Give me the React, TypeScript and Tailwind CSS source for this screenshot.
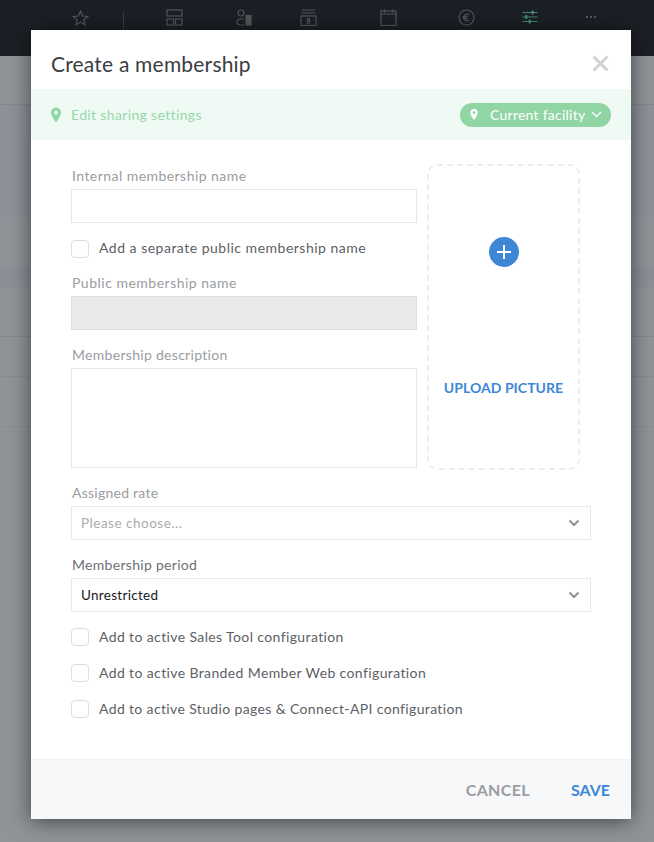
import React from "react";

const Box = ({ children, className = "" }: { children?: React.ReactNode; className?: string }) => (
  <div className={className}>{children}</div>
);

const Chevron = () => (
  <svg width="12" height="8" viewBox="0 0 12 8" fill="none" className="shrink-0">
    <path d="M1.5 1.5 6 6l4.5-4.5" stroke="#8f9296" strokeWidth="2" />
  </svg>
);

const Pin = ({ w, h, color, hole }: { w: number; h: number; color: string; hole: string }) => (
  <svg width={w} height={h} viewBox="0 0 10 15" className="shrink-0">
    <path d="M5 0a5 5 0 0 1 5 5c0 3.4-3.4 7.6-5 10C3.4 12.6 0 8.4 0 5a5 5 0 0 1 5-5z" fill={color} />
    <circle cx="5" cy="5" r="1.9" fill={hole} />
  </svg>
);

const Check = ({ label, track }: { label: string; track: string }) => (
  <div className="flex h-[18px] items-center gap-[10px]">
    <span className="h-[18px] w-[18px] shrink-0 rounded-[4px] border border-[#dcdee0] bg-white" />
    <span className={`mb-[2px] text-[14px] text-[#5d6066] ${track}`}>{label}</span>
  </div>
);

const Label = ({ children, dark, track = "tracking-[0.3px]" }: { children: React.ReactNode; dark?: boolean; track?: string }) => (
  <div className={`h-[17px] pl-[1px] text-[14px] leading-[15px] ${track} ${dark ? "text-[#6d7076]" : "text-[#9a9da1]"}`}>
    {children}
  </div>
);

const Select = ({ text, placeholder, track }: { text: string; placeholder?: boolean; track: string }) => (
  <div className="mt-[4px] flex h-[34px] w-[520px] items-center justify-between border border-[#e8e9ea] pl-[9px] pr-[10px]">
    <span className={`text-[13.5px] ${track} ${placeholder ? "text-[#a9abae]" : "text-[#16181b]"}`}>{text}</span>
    <Chevron />
  </div>
);

const ic = "#53565b";

const TopIcons = () => (
  <div className="flex h-[30px] items-start">
    <div className="ml-[72px] mt-[10px] flex">
      <svg width="17" height="16" viewBox="0 0 17 16" fill="none">
        <path d="M8.5 1.2 10.6 6l5.1.5-3.900 3.400 1.200 5-4.500-2.700L4 14.900l1.200-5L1.300 6.500 6.400 6z" stroke={ic} strokeWidth="1.2" />
      </svg>
    </div>
    <div className="ml-[34px] mt-[12px] h-[18px] w-px bg-[#3a3d42]" />
    <div className="ml-[42px] mt-[9px]">
      <svg width="17" height="17" viewBox="0 0 17 17" fill="none" stroke={ic} strokeWidth="1.2">
        <rect x="1" y="1" width="15" height="6" />
        <rect x="1" y="10" width="6.500" height="6" />
        <rect x="9.500" y="10" width="6.500" height="6" />
      </svg>
    </div>
    <div className="ml-[53px] mt-[9px]">
      <svg width="16" height="17" viewBox="0 0 16 17" fill="none" stroke={ic} strokeWidth="1.2">
        <circle cx="5" cy="4" r="3" />
        <path d="M8 10H5a4 3 0 0 0-4 3 3 3 0 0 0 3 3h4" />
        <rect x="10" y="6.500" width="5" height="9.500" fill={ic} />
      </svg>
    </div>
    <div className="ml-[48px] mt-[9px]">
      <svg width="17" height="17" viewBox="0 0 17 17" fill="none" stroke={ic} strokeWidth="1.2">
        <path d="M2 1h13M1.500 4h14" />
        <rect x="1" y="7" width="15" height="9.500" />
        <circle cx="8.500" cy="10.500" r="1.200" />
        <circle cx="8.500" cy="13.500" r="1.500" />
      </svg>
    </div>
    <div className="ml-[63px] mt-[9px]">
      <svg width="17" height="17" viewBox="0 0 17 17" fill="none" stroke={ic} strokeWidth="1.2">
        <rect x="1" y="2" width="15" height="14.500" />
        <path d="M1 5h15M4.500 0.500v3M12.500 0.500v3" />
      </svg>
    </div>
    <div className="ml-[61px] mt-[9px]">
      <svg width="17" height="17" viewBox="0 0 17 17" fill="none" stroke={ic} strokeWidth="1.2">
        <circle cx="8.500" cy="8.500" r="7.500" />
        <path d="M11 5.700a3.300 3.300 0 1 0 0 5.600M4.800 7.700h4.700M4.800 9.500h4.700" />
      </svg>
    </div>
    <div className="ml-[47px] mt-[9px]">
      <svg width="16" height="16" viewBox="0 0 16 16" fill="#3f8a72" stroke="#3f8a72">
        <path d="M0.500 3.500h15M0.500 8h15M0.500 12.500h15" strokeWidth="1.100" />
        <rect x="9.500" y="1.500" width="2.500" height="4" rx="1" stroke="none" />
        <rect x="3" y="6" width="2.500" height="4" rx="1" stroke="none" />
        <rect x="6.500" y="10.500" width="2.500" height="4" rx="1" stroke="none" />
      </svg>
    </div>
    <div className="ml-[48px] mt-[16px] flex gap-[2px]">
      <span className="h-[2px] w-[2px] rounded-full bg-[#6a6d72]" />
      <span className="h-[2px] w-[2px] rounded-full bg-[#6a6d72]" />
      <span className="h-[2px] w-[2px] rounded-full bg-[#6a6d72]" />
    </div>
  </div>
);

export default function App() {
  return (
    <div className="relative h-[842px] w-[654px] overflow-hidden bg-[#909498] font-['Lato','Noto_Sans',sans-serif]">
      <div className="h-[56px] bg-[#1c1f25]">
        <TopIcons />
      </div>
      <Box className="h-[49px] border-b border-[#85898e] bg-[#909498]" />
      <Box className="h-[113px] bg-[#8d9199]" />
      <Box className="h-[49px] bg-[#909498]" />
      <Box className="h-[20px] bg-[#8b8f97]" />
      <Box className="h-[50px] border-b border-[#85898e] bg-[#909498]" />
      <Box className="h-[40px] border-b border-[#898d91] bg-[#909498]" />
      <Box className="h-[50px] border-b border-[#898d91] bg-[#909498]" />

      <div className="absolute left-[31px] top-[30px] flex h-[789px] w-[600px] flex-col bg-white shadow-[0_2px_20px_rgba(0,0,0,0.55)]">
        <div className="flex h-[59px] items-center justify-between pl-[20px] pr-[22px] pt-[9px]">
          <span className="text-[21px] tracking-[0.2px] text-[#3a3d43]">Create a membership</span>
          <svg width="17" height="17" viewBox="0 0 17 17" className="mb-[1px]">
            <path d="M1.500 1.500l14 14M15.500 1.500l-14 14" stroke="#d2d3d4" strokeWidth="3" />
          </svg>
        </div>
        <div className="flex h-[51px] items-center justify-between bg-[#f0faf4] pl-[20px] pr-[20px]">
          <div className="flex items-center gap-[10px]">
            <Pin w={10} h={16} color="#8fd6a5" hole="#f0faf4" />
            <span className="mb-[1px] text-[14px] tracking-[0.35px] text-[#94d9a9]">Edit sharing settings</span>
          </div>
          <div className="flex h-[24px] w-[151px] items-center rounded-full bg-[#90d5a3] pl-[10px]">
            <Pin w={8} h={11} color="#ffffff" hole="#90d5a3" />
            <span className="mb-[1px] ml-[12px] text-[14px] tracking-[0.25px] text-white">Current facility</span>
            <svg width="11" height="7" viewBox="0 0 11 7" fill="none" className="ml-[6px]">
              <path d="M1 1l4.500 4.500L10 1" stroke="#fff" strokeWidth="1.300" />
            </svg>
          </div>
        </div>

        <div className="flex-1 pl-[40px] pt-[24px]">
          <div className="flex gap-[11px]">
            <div className="w-[346px]">
              <div className="pt-[4px]">
                <Label track="tracking-[0.45px]">Internal membership name</Label>
              </div>
              <div className="mt-[4px] h-[34px] border border-[#e5e6e7] bg-white" />
              <div className="mt-[17px]">
                <Check label="Add a separate public membership name" track="tracking-[0.5px] pb-[1px]" />
              </div>
              <div className="mt-[17px]">
                <Label track="tracking-[0.5px]">Public membership name</Label>
              </div>
              <div className="mt-[4px] h-[34px] border border-[#dcdee0] bg-[#e8e9eb]" />
              <div className="mt-[17px]">
                <Label>Membership description</Label>
              </div>
              <div className="mt-[4px] h-[100px] border border-[#e5e6e7] bg-white" />
            </div>
            <div className="-ml-[1px] flex h-[306px] w-[153px] flex-col items-center rounded-[10px] border-2 border-dashed border-[#ecedee] pt-[71px]">
              <div className="flex h-[30px] w-[30px] items-center justify-center rounded-full bg-[#3d87d6]">
                <svg width="16" height="16" viewBox="0 0 16 16">
                  <path d="M8 1v14M1 8h14" stroke="#fff" strokeWidth="2" />
                </svg>
              </div>
              <span className="mt-[110px] text-[14px] font-bold tracking-[0.05px] text-[#3d87d6]">UPLOAD PICTURE</span>
            </div>
          </div>

          <div className="mt-[15px]">
            <Label track="tracking-[0.25px]">Assigned rate</Label>
          </div>
          <Select text="Please choose..." placeholder track="tracking-[0.5px]" />
          <div className="mt-[17px]">
            <Label dark>Membership period</Label>
          </div>
          <Select text="Unrestricted" track="tracking-[0.3px]" />
          <div className="mt-[16px] flex flex-col gap-[18px]">
            <Check label="Add to active Sales Tool configuration" track="tracking-[0.38px]" />
            <Check label="Add to active Branded Member Web configuration" track="tracking-[0.38px]" />
            <Check label="Add to active Studio pages & Connect-API configuration" track="tracking-[0.36px]" />
          </div>
        </div>

        <div className="flex h-[60px] items-center justify-end gap-[41px] border-t border-[#f0f1f2] bg-[#f7f8f9] pr-[21px]">
          <span className="text-[16px] font-bold tracking-[0.35px] text-[#9a9da1]">CANCEL</span>
          <span className="text-[16px] font-bold text-[#3d87d6]">SAVE</span>
        </div>
      </div>
    </div>
  );
}
